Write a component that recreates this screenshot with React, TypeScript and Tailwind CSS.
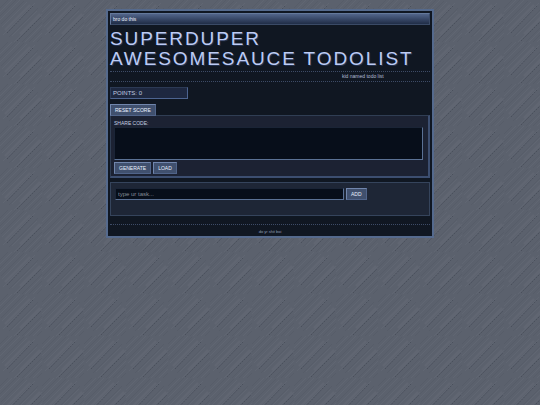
import { useState } from "react";

const buttonStyle =
    "h-3 border border-t-[#7186ad] border-l-[#7186ad] border-r-[#50648a] border-b-[#50648a] bg-[#40506e] px-1 text-[5px] leading-[10px] text-[#eaf0ff] uppercase";

const fieldStyle =
    "border border-t-[#1a2436] border-l-[#1a2436] border-r-[#5a7195] border-b-[#5a7195] bg-[#070e1a] text-[#c3d0ea] outline-none rounded-none";

// Brushed metal tile: a few long scratches over fine diagonal grain
const Backdrop = () => {
    return (
        <svg aria-hidden="true" className="absolute inset-0 -z-10 h-full w-full">
            <defs>
                <pattern id="metal" width="42" height="42" patternUnits="userSpaceOnUse">
                    <rect width="42" height="42" fill="#5b616d" />
                    <g stroke="#fff" strokeOpacity="0.03" strokeWidth="1">
                        <path d="M0 12L12 0M0 20L20 0M2 27L27 2M3 35L35 3M12 36L37 11M14 42L42 14M25 42L42 25M33 42L42 33" />
                        <path d="M5 30L30 5M20 34L40 14" strokeWidth="2" />
                    </g>
                    <g stroke="#000" strokeOpacity="0.04" strokeWidth="1">
                        <path d="M0 8L8 0M0 16L16 0M1 24L24 1M9 37L38 8M22 42L42 22M29 42L42 29M37 42L42 37" />
                    </g>
                    <g stroke="#2f3541" strokeOpacity="0.4" strokeWidth="1" strokeDasharray="2 1">
                        <path d="M7 33L33 6" />
                        <path d="M17 41L41 17" />
                    </g>
                </pattern>
            </defs>
            <rect width="100%" height="100%" fill="url(#metal)" />
        </svg>
    );
};

const TitleBar = () => {
    return (
        <div className="h-3 border border-t-[#64799c] border-l-[#64799c] border-r-[#3a4a66] border-b-[#3a4a66] bg-linear-to-b from-[#52658a] to-[#202d47] px-0.5 text-[5px] leading-[10px] text-[#eaf0ff]">
            bro do this
        </div>
    );
};

const ShareBox = () => {
    const [code, setCode] = useState("");

    return (
        <section className="-mt-px border border-t-[#303e54] border-l-[#303e54] border-r-2 border-b-2 border-r-[#3c4e70] border-b-[#3c4e70] bg-[#1c2233] pt-1 pr-[5px] pb-0.5 pl-[3px]">
            <label htmlFor="share" className="block text-[5px] leading-[6px] text-[#c4cee2] uppercase">
                Share code:
            </label>
            <textarea
                id="share"
                value={code}
                onChange={(e) => setCode(e.target.value)}
                className={`${fieldStyle} mt-px block h-[33px] w-full resize-none p-0.5 text-[6px]`}
            />
            <div className="mt-0.5 flex gap-0.5">
                <button type="button" className={buttonStyle}>Generate</button>
                <button type="button" className={buttonStyle}>Load</button>
            </div>
        </section>
    );
};

const TaskBox = () => {
    const [task, setTask] = useState("");

    return (
        <form
            onSubmit={(e) => e.preventDefault()}
            className="mt-1 flex h-[34px] items-start gap-0.5 border border-[#35445c] bg-[#1e2636] px-1 pt-[5px]"
        >
            <input
                type="text"
                aria-label="Task"
                placeholder="type ur task..."
                value={task}
                onChange={(e) => setTask(e.target.value)}
                className={`${fieldStyle} h-3 w-[229px] px-0.5 text-[6px] leading-[10px] placeholder:text-[#858b96]`}
            />
            <button type="submit" className={buttonStyle}>Add</button>
        </form>
    );
};

const App = () => {
    return (
        <div className="relative isolate min-h-screen px-4 pt-[9px] font-['Liberation_Sans',Arial,sans-serif]">
            <Backdrop />
            <main className="mx-auto max-w-[328px] border-2 border-[#556a8d] bg-[#101722] p-0.5 pb-px">
                <TitleBar />
                <h1 className="mt-1 text-[19px] leading-5 tracking-widest text-[#bccbf4] uppercase [text-shadow:1px_1px_0_#22304d]">
                    Superduper awesomesauce todolist
                </h1>
                <div className="mt-0.5 flex h-[11px] items-center overflow-hidden border-y border-dotted border-[#3d4b66] pl-[232px] text-[5px] leading-[9px] whitespace-nowrap text-[#b3bed6]">
                    kid named todo list
                </div>
                <div className="mt-[5px] h-3 w-[78px] border border-t-[#2c3a55] border-l-[#2c3a55] border-r-[#4d6490] border-b-[#4d6490] bg-[#1e2840] px-0.5 text-[6px] leading-[10px] text-[#c0cbe0] uppercase">
                    Points: 0
                </div>
                <div className="mt-[5px] flex">
                    <button type="button" className={buttonStyle}>Reset score</button>
                </div>
                <ShareBox />
                <TaskBox />
                <footer className="mt-2 border-t border-dotted border-[#3d4b66] pt-1 text-center text-[4px] leading-[6px] text-[#929eb8]">
                    do yr shit boi
                </footer>
            </main>
        </div>
    );
};

export default App;
